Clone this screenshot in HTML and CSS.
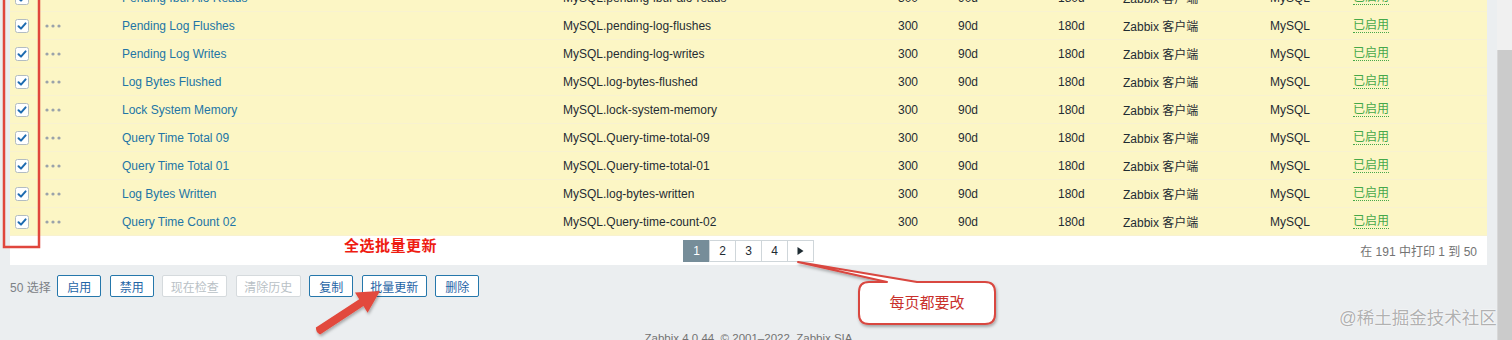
FILE: index.html
```html
<!DOCTYPE html>
<html lang="zh-CN">
<head>
    <meta charset="UTF-8">
    <title>Items - Zabbix</title>
    <link rel="stylesheet" href="styles.css">
</head>
<body>
    <div class="page">
        <div class="main">
            <div class="list">
                <div class="row">
                    <span class="cell"><svg class="check" width="14" height="14" viewBox="0 0 14 14"><rect x="0.5" y="0.5" width="13" height="13" rx="2"/><path d="M3.5 7.2 L6 9.6 L10.6 4.4"/></svg></span>
                    <span class="cell"><svg class="dots" width="16" height="4" viewBox="0 0 16 4"><circle cx="2" cy="2" r="1.6"/><circle cx="8" cy="2" r="1.6"/><circle cx="14" cy="2" r="1.6"/></svg></span>
                    <span class="cell"><a class="name">Pending Ibuf Aio Reads</a></span>
                    <span class="cell">MySQL.pending-ibuf-aio-reads</span>
                    <span class="cell">300</span>
                    <span class="cell">90d</span>
                    <span class="cell">180d</span>
                    <span class="cell">Zabbix 客户端</span>
                    <span class="cell">MySQL</span>
                    <span class="cell"><a class="status">已启用</a></span>
                </div>
                <div class="row">
                    <span class="cell"><svg class="check" width="14" height="14" viewBox="0 0 14 14"><rect x="0.5" y="0.5" width="13" height="13" rx="2"/><path d="M3.5 7.2 L6 9.6 L10.6 4.4"/></svg></span>
                    <span class="cell"><svg class="dots" width="16" height="4" viewBox="0 0 16 4"><circle cx="2" cy="2" r="1.6"/><circle cx="8" cy="2" r="1.6"/><circle cx="14" cy="2" r="1.6"/></svg></span>
                    <span class="cell"><a class="name">Pending Log Flushes</a></span>
                    <span class="cell">MySQL.pending-log-flushes</span>
                    <span class="cell">300</span>
                    <span class="cell">90d</span>
                    <span class="cell">180d</span>
                    <span class="cell">Zabbix 客户端</span>
                    <span class="cell">MySQL</span>
                    <span class="cell"><a class="status">已启用</a></span>
                </div>
                <div class="row">
                    <span class="cell"><svg class="check" width="14" height="14" viewBox="0 0 14 14"><rect x="0.5" y="0.5" width="13" height="13" rx="2"/><path d="M3.5 7.2 L6 9.6 L10.6 4.4"/></svg></span>
                    <span class="cell"><svg class="dots" width="16" height="4" viewBox="0 0 16 4"><circle cx="2" cy="2" r="1.6"/><circle cx="8" cy="2" r="1.6"/><circle cx="14" cy="2" r="1.6"/></svg></span>
                    <span class="cell"><a class="name">Pending Log Writes</a></span>
                    <span class="cell">MySQL.pending-log-writes</span>
                    <span class="cell">300</span>
                    <span class="cell">90d</span>
                    <span class="cell">180d</span>
                    <span class="cell">Zabbix 客户端</span>
                    <span class="cell">MySQL</span>
                    <span class="cell"><a class="status">已启用</a></span>
                </div>
                <div class="row">
                    <span class="cell"><svg class="check" width="14" height="14" viewBox="0 0 14 14"><rect x="0.5" y="0.5" width="13" height="13" rx="2"/><path d="M3.5 7.2 L6 9.6 L10.6 4.4"/></svg></span>
                    <span class="cell"><svg class="dots" width="16" height="4" viewBox="0 0 16 4"><circle cx="2" cy="2" r="1.6"/><circle cx="8" cy="2" r="1.6"/><circle cx="14" cy="2" r="1.6"/></svg></span>
                    <span class="cell"><a class="name">Log Bytes Flushed</a></span>
                    <span class="cell">MySQL.log-bytes-flushed</span>
                    <span class="cell">300</span>
                    <span class="cell">90d</span>
                    <span class="cell">180d</span>
                    <span class="cell">Zabbix 客户端</span>
                    <span class="cell">MySQL</span>
                    <span class="cell"><a class="status">已启用</a></span>
                </div>
                <div class="row">
                    <span class="cell"><svg class="check" width="14" height="14" viewBox="0 0 14 14"><rect x="0.5" y="0.5" width="13" height="13" rx="2"/><path d="M3.5 7.2 L6 9.6 L10.6 4.4"/></svg></span>
                    <span class="cell"><svg class="dots" width="16" height="4" viewBox="0 0 16 4"><circle cx="2" cy="2" r="1.6"/><circle cx="8" cy="2" r="1.6"/><circle cx="14" cy="2" r="1.6"/></svg></span>
                    <span class="cell"><a class="name">Lock System Memory</a></span>
                    <span class="cell">MySQL.lock-system-memory</span>
                    <span class="cell">300</span>
                    <span class="cell">90d</span>
                    <span class="cell">180d</span>
                    <span class="cell">Zabbix 客户端</span>
                    <span class="cell">MySQL</span>
                    <span class="cell"><a class="status">已启用</a></span>
                </div>
                <div class="row">
                    <span class="cell"><svg class="check" width="14" height="14" viewBox="0 0 14 14"><rect x="0.5" y="0.5" width="13" height="13" rx="2"/><path d="M3.5 7.2 L6 9.6 L10.6 4.4"/></svg></span>
                    <span class="cell"><svg class="dots" width="16" height="4" viewBox="0 0 16 4"><circle cx="2" cy="2" r="1.6"/><circle cx="8" cy="2" r="1.6"/><circle cx="14" cy="2" r="1.6"/></svg></span>
                    <span class="cell"><a class="name">Query Time Total 09</a></span>
                    <span class="cell">MySQL.Query-time-total-09</span>
                    <span class="cell">300</span>
                    <span class="cell">90d</span>
                    <span class="cell">180d</span>
                    <span class="cell">Zabbix 客户端</span>
                    <span class="cell">MySQL</span>
                    <span class="cell"><a class="status">已启用</a></span>
                </div>
                <div class="row">
                    <span class="cell"><svg class="check" width="14" height="14" viewBox="0 0 14 14"><rect x="0.5" y="0.5" width="13" height="13" rx="2"/><path d="M3.5 7.2 L6 9.6 L10.6 4.4"/></svg></span>
                    <span class="cell"><svg class="dots" width="16" height="4" viewBox="0 0 16 4"><circle cx="2" cy="2" r="1.6"/><circle cx="8" cy="2" r="1.6"/><circle cx="14" cy="2" r="1.6"/></svg></span>
                    <span class="cell"><a class="name">Query Time Total 01</a></span>
                    <span class="cell">MySQL.Query-time-total-01</span>
                    <span class="cell">300</span>
                    <span class="cell">90d</span>
                    <span class="cell">180d</span>
                    <span class="cell">Zabbix 客户端</span>
                    <span class="cell">MySQL</span>
                    <span class="cell"><a class="status">已启用</a></span>
                </div>
                <div class="row">
                    <span class="cell"><svg class="check" width="14" height="14" viewBox="0 0 14 14"><rect x="0.5" y="0.5" width="13" height="13" rx="2"/><path d="M3.5 7.2 L6 9.6 L10.6 4.4"/></svg></span>
                    <span class="cell"><svg class="dots" width="16" height="4" viewBox="0 0 16 4"><circle cx="2" cy="2" r="1.6"/><circle cx="8" cy="2" r="1.6"/><circle cx="14" cy="2" r="1.6"/></svg></span>
                    <span class="cell"><a class="name">Log Bytes Written</a></span>
                    <span class="cell">MySQL.log-bytes-written</span>
                    <span class="cell">300</span>
                    <span class="cell">90d</span>
                    <span class="cell">180d</span>
                    <span class="cell">Zabbix 客户端</span>
                    <span class="cell">MySQL</span>
                    <span class="cell"><a class="status">已启用</a></span>
                </div>
                <div class="row">
                    <span class="cell"><svg class="check" width="14" height="14" viewBox="0 0 14 14"><rect x="0.5" y="0.5" width="13" height="13" rx="2"/><path d="M3.5 7.2 L6 9.6 L10.6 4.4"/></svg></span>
                    <span class="cell"><svg class="dots" width="16" height="4" viewBox="0 0 16 4"><circle cx="2" cy="2" r="1.6"/><circle cx="8" cy="2" r="1.6"/><circle cx="14" cy="2" r="1.6"/></svg></span>
                    <span class="cell"><a class="name">Query Time Count 02</a></span>
                    <span class="cell">MySQL.Query-time-count-02</span>
                    <span class="cell">300</span>
                    <span class="cell">90d</span>
                    <span class="cell">180d</span>
                    <span class="cell">Zabbix 客户端</span>
                    <span class="cell">MySQL</span>
                    <span class="cell"><a class="status">已启用</a></span>
                </div>

                <!-- Paging -->
                <div class="list-foot">
                    <div></div>
                    <div class="paging">
                        <span class="page-btn active">1</span>
                        <span class="page-btn">2</span>
                        <span class="page-btn">3</span>
                        <span class="page-btn">4</span>
                        <span class="page-btn"><svg width="7" height="8" viewBox="0 0 7 8"><path d="M0.5 0 L6.5 4 L0.5 8 Z"/></svg></span>
                    </div>
                    <div class="paging-info">在 191 中打印 1 到 50</div>
                </div>
            </div>

            <!-- Mass actions -->
            <div class="actions">
                <span class="selected">50 选择</span>
                <button class="btn short">启用</button>
                <button class="btn short">禁用</button>
                <button class="btn long" disabled>现在检查</button>
                <button class="btn long" disabled>清除历史</button>
                <button class="btn short">复制</button>
                <button class="btn long">批量更新</button>
                <button class="btn short">删除</button>
            </div>

            <div class="footer">Zabbix 4.0.44. © 2001–2022, Zabbix SIA</div>
        </div>
        <div class="scrollbar"><div class="thumb"></div></div>

        <!-- Annotations drawn over the screenshot -->
        <svg class="marks" width="1512" height="340" viewBox="0 0 1512 340">
            <defs>
                <filter id="shadow" x="-20%" y="-20%" width="140%" height="160%">
                    <feDropShadow dx="1" dy="2" stdDeviation="1.5" flood-color="#000" flood-opacity="0.3"/>
                </filter>
            </defs>
            <rect class="select-box" x="4" y="-10" width="35" height="257"/>
            <path class="arrow" filter="url(#shadow)" d="M380 291 L367.6 312.8 L363.4 306 L320.1 334.4 Q316 333 315.9 327.6 L359.2 299.2 L355 292.4 Z"/>
            <path class="callout" filter="url(#shadow)" d="M869 282 H887 L798 262 L917 282 H985 Q995 282 995 292 V314 Q995 324 985 324 H869 Q859 324 859 314 V292 Q859 282 869 282 Z"/>
        </svg>
        <div class="note-title">全选批量更新</div>
        <div class="note-callout">每页都要改</div>
        <div class="watermark">@稀土掘金技术社区</div>
    </div>
</body>
</html>
```

FILE: styles.css
```css
/* Basic Reset */
html,
body {
    margin: 0;
    padding: 0;
    height: 340px;
    overflow: hidden;
    background-color: #ebeef0;
    font-family: 'Liberation Sans', Arial, 'Noto Sans CJK SC', sans-serif;
    font-size: 12px;
    color: #1f2c33;
}

.page {
    position: relative;
    display: flex;
    height: 340px;
}

.main {
    width: 1497px;
    padding: 0 0 0 10px;
    box-sizing: border-box;
}

/* List */
.list {
    width: 1477px;
    margin-top: -16px;
    background: #ffffff;
}

.row {
    display: grid;
    grid-template-columns: 30px 77px 441px 335px 60px 100px 65px 147px 83px 1fr;
    height: 28px;
    box-sizing: border-box;
    background-color: #fcf6c5;
    border-bottom: 1px solid #f8f2d0;
}

.cell {
    display: flex;
    align-items: center;
    padding-left: 5px;
    white-space: nowrap;
}

.check rect {
    fill: #ffffff;
    stroke: #b2bcc2;
}

.check path {
    fill: none;
    stroke: #1d6bb0;
    stroke-width: 2;
    stroke-linecap: round;
    stroke-linejoin: round;
}

.dots circle {
    fill: #9aa3aa;
}

.name {
    color: #2275a6;
}

.status {
    color: #45a84a;
    border-bottom: 1px dotted #45a84a;
    line-height: 14px;
}

/* Paging */
.list-foot {
    display: grid;
    grid-template-columns: 1fr auto 1fr;
    align-items: center;
    height: 29px;
}

.paging {
    display: flex;
}

.page-btn {
    display: flex;
    align-items: center;
    justify-content: center;
    width: 27px;
    height: 22px;
    box-sizing: border-box;
    border: 1px solid #cfd6da;
    margin-left: -1px;
    background: #ffffff;
    color: #1f2c33;
}

.page-btn:first-child {
    margin-left: 0;
}

.page-btn.active {
    background: #768d99;
    border-color: #768d99;
    color: #ffffff;
}

.page-btn svg path {
    fill: #1f2c33;
}

.paging-info {
    text-align: right;
    padding-right: 10px;
    color: #737373;
}

/* Mass actions */
.actions {
    display: flex;
    align-items: center;
    gap: 8.5px;
    padding-top: 10px;
}

.selected {
    color: #7b8186;
    margin-right: -2px;
}

.btn {
    height: 22px;
    padding: 0;
    box-sizing: border-box;
    border: 1px solid #2577ab;
    border-radius: 2px;
    background: #ffffff;
    color: #1f65a6;
    font-family: inherit;
    font-size: 12px;
}

.btn.short {
    width: 44px;
}

.btn.long {
    width: 65px;
}

.btn:disabled {
    border-color: #d5dadd;
    color: #b9c1c6;
}

.footer {
    margin-top: 35px;
    text-align: center;
    width: 1477px;
    color: #737373;
    font-size: 11.5px;
}

/* Scrollbar */
.scrollbar {
    width: 15px;
    background: #f0f0f0;
    display: flex;
    flex-direction: column;
    padding-top: 50px;
}

.thumb {
    flex: 1;
    background: #cbcbcb;
    border-left: 1px solid #d8d8d8;
}

/* Annotations */
.marks {
    position: absolute;
    top: 0;
    left: 0;
    pointer-events: none;
}

.select-box {
    fill: none;
    stroke: #e0463d;
    stroke-width: 2.5;
}

.arrow {
    fill: #e2483c;
}

.callout {
    fill: #ffffff;
    stroke: #d9463f;
    stroke-width: 2;
    stroke-linejoin: round;
}

.note-title {
    position: absolute;
    left: 344px;
    top: 234px;
    color: #ee1c12;
    font-size: 15px;
    font-weight: bold;
    letter-spacing: 0.5px;
}

.note-callout {
    position: absolute;
    left: 859px;
    top: 282px;
    width: 136px;
    line-height: 42px;
    text-align: center;
    color: #c9302c;
    font-size: 15px;
}

.watermark {
    position: absolute;
    left: 1339px;
    top: 304px;
    font-size: 17.5px;
    color: rgba(110, 110, 110, 0.55);
    text-shadow: 0 0 1px #ffffff, 0 0 2px #ffffff;
    white-space: nowrap;
}
```
